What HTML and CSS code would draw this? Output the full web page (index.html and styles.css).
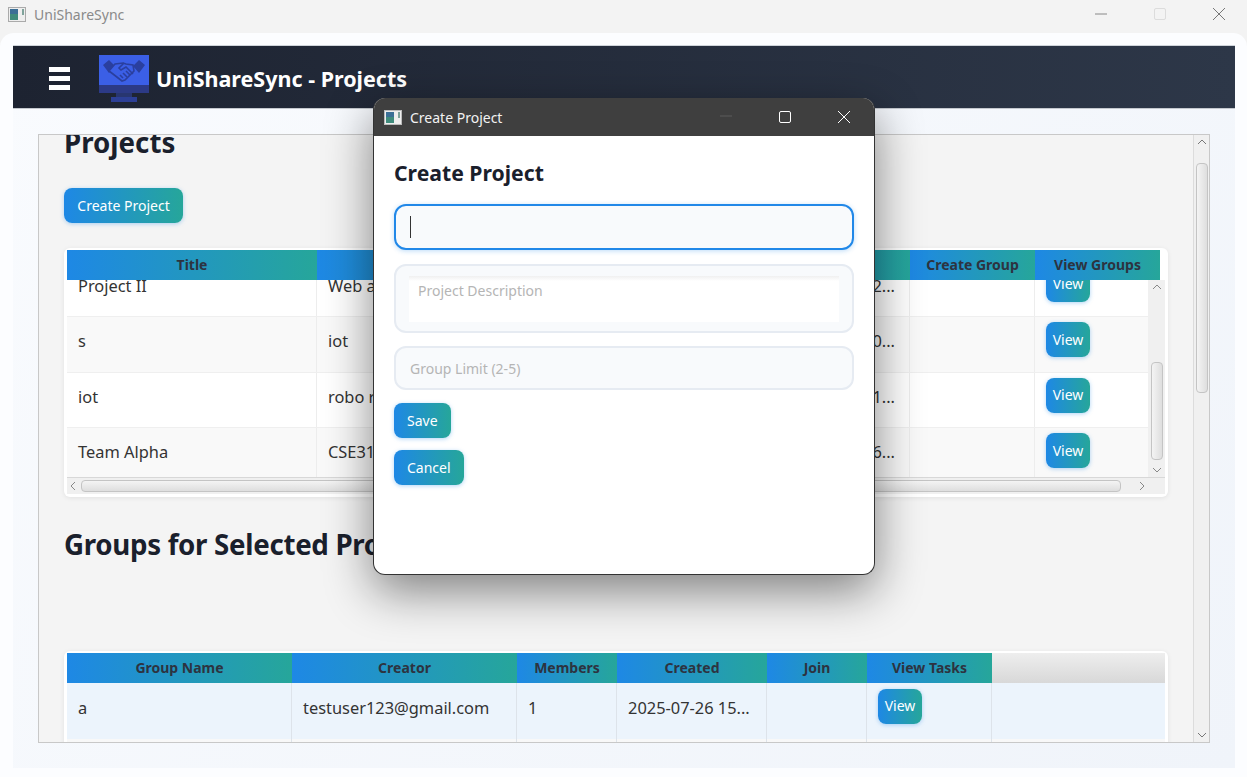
FILE: index.html
```html
<!DOCTYPE html>
<html lang="en">
<head>
  <meta charset="UTF-8" />
  <title>UniShareSync</title>
  <link rel="stylesheet" href="styles.css">
</head>
<body>
  <div class="titlebar">
    <svg class="win-icon" width="18" height="15" viewBox="0 0 18 15">
      <rect x="0.5" y="0.5" width="17" height="14" fill="#eee" stroke="#aaa"/>
      <rect x="2" y="2" width="8" height="11" fill="#3f8b7c"/>
      <rect x="2" y="2" width="8" height="5" fill="#3b6f96"/>
      <rect x="14" y="2" width="2" height="6" fill="#7fa39b"/>
    </svg>
    <span class="titlebar-text">UniShareSync</span>
    <div class="win-controls">
      <svg width="14" height="14" viewBox="0 0 14 14"><path d="M1 7h12" stroke="#888" stroke-width="1"/></svg>
      <svg width="14" height="14" viewBox="0 0 14 14"><rect x="1.5" y="1.5" width="11" height="11" rx="1.5" fill="none" stroke="#dcdcdc"/></svg>
      <svg width="14" height="14" viewBox="0 0 14 14"><path d="M1 1l12 12M13 1L1 13" stroke="#777" stroke-width="1"/></svg>
    </div>
  </div>

  <div class="app">
    <div class="app-inner">
      <header class="navbar">
        <div class="hamburger"><span></span><span></span><span></span></div>
        <svg class="logo" width="50" height="47" viewBox="0 0 50 47">
          <rect x="0" y="0" width="50" height="30" fill="#3b5fe6"/>
          <rect x="0" y="30" width="50" height="8" fill="#2c3a86"/>
          <rect x="17" y="38" width="16" height="4" fill="#283670"/>
          <rect x="12" y="42" width="26" height="5" fill="#2c3f96"/>
          <path d="M4 10l6-5 6 6-6 7zM46 10l-6-5-6 6 6 7z" fill="#2a3f9e"/>
          <path d="M16 9l8-1 3 1 7 1 1 6-9 9-3 1-9-7-4-3z" fill="#3b5fe6" stroke="#2a3f9e" stroke-width="1.6"/>
          <path d="M25 8l-5 5 2 2 5-3 7 7M24 18l4 4M27 16l4 4M21 20l3 3" fill="none" stroke="#2a3f9e" stroke-width="1.6"/>
        </svg>
        <span class="nav-title">UniShareSync - Projects</span>
      </header>

      <div class="main">
        <div class="pane">
          <div class="pane-content">
            <h1 class="page-title first">Projects</h1>
            <button class="btn btn-create">Create Project</button>

            <div class="card projects">
              <div class="thead cols-projects">
                <div class="th">Title</div>
                <div class="th"></div>
                <div class="th"></div>
                <div class="th"></div>
                <div class="th">Create Group</div>
                <div class="th">View Groups</div>
              </div>
              <div class="tbody-wrap">
                <div class="tbody">
                  <div class="row cols-projects">
                    <div class="td">Project II</div><div class="td">Web app</div><div class="td"></div><div class="td end">2...</div><div class="td"></div>
                    <div class="td"><button class="btn btn-view">View</button></div>
                  </div>
                  <div class="row odd cols-projects">
                    <div class="td">s</div><div class="td">iot</div><div class="td"></div><div class="td end">0...</div><div class="td"></div>
                    <div class="td"><button class="btn btn-view">View</button></div>
                  </div>
                  <div class="row cols-projects">
                    <div class="td">iot</div><div class="td">robo r</div><div class="td"></div><div class="td end">1...</div><div class="td"></div>
                    <div class="td"><button class="btn btn-view">View</button></div>
                  </div>
                  <div class="row odd cols-projects">
                    <div class="td">Team Alpha</div><div class="td">CSE31</div><div class="td"></div><div class="td end">6...</div><div class="td"></div>
                    <div class="td"><button class="btn btn-view">View</button></div>
                  </div>
                </div>
                <div class="sb-v small">
                  <svg class="arrow" width="10" height="6" viewBox="0 0 10 6"><path d="M1 5l4-4 4 4" fill="none" stroke="#888"/></svg>
                  <div class="thumb-v small-thumb"></div>
                  <svg class="arrow" width="10" height="6" viewBox="0 0 10 6"><path d="M1 1l4 4 4-4" fill="none" stroke="#888"/></svg>
                </div>
              </div>
              <div class="sb-h">
                <svg class="arrow" width="6" height="10" viewBox="0 0 6 10"><path d="M5 1L1 5l4 4" fill="none" stroke="#888"/></svg>
                <div class="thumb-h"></div>
                <svg class="arrow" width="6" height="10" viewBox="0 0 6 10"><path d="M1 1l4 4-4 4" fill="none" stroke="#888"/></svg>
              </div>
            </div>

            <h1 class="page-title second">Groups for Selected Project</h1>

            <div class="card groups">
              <div class="thead cols-groups">
                <div class="th">Group Name</div>
                <div class="th">Creator</div>
                <div class="th">Members</div>
                <div class="th">Created</div>
                <div class="th">Join</div>
                <div class="th">View Tasks</div>
                <div class="th filler"></div>
              </div>
              <div class="row selected cols-groups">
                <div class="td">a</div><div class="td">testuser123@gmail.com</div><div class="td">1</div>
                <div class="td">2025-07-26 15...</div><div class="td"></div>
                <div class="td"><button class="btn btn-view">View</button></div><div class="td"></div>
              </div>
              <div class="row tail cols-groups">
                <div class="td"></div><div class="td"></div><div class="td"></div><div class="td"></div><div class="td"></div><div class="td"></div><div class="td"></div>
              </div>
            </div>
          </div>

          <div class="sb-v">
            <svg class="arrow" width="10" height="6" viewBox="0 0 10 6"><path d="M1 5l4-4 4 4" fill="none" stroke="#777"/></svg>
            <div class="thumb-v"></div>
            <svg class="arrow" width="10" height="6" viewBox="0 0 10 6"><path d="M1 1l4 4 4-4" fill="none" stroke="#777"/></svg>
          </div>
        </div>
      </div>
    </div>
  </div>

  <div class="modal">
    <div class="modal-bar">
      <svg class="win-icon" width="18" height="15" viewBox="0 0 18 15">
        <rect x="0.5" y="0.5" width="17" height="14" fill="#eee" stroke="#bbb"/>
        <rect x="2" y="2" width="8" height="11" fill="#3f8b7c"/>
        <rect x="2" y="2" width="8" height="5" fill="#3b6f96"/>
        <rect x="14" y="2" width="2" height="6" fill="#7fa39b"/>
      </svg>
      <span class="modal-bar-text">Create Project</span>
      <div class="modal-controls">
        <svg width="14" height="14" viewBox="0 0 14 14"><path d="M1 6h12" stroke="#5c5c5c"/></svg>
        <svg width="14" height="14" viewBox="0 0 14 14"><rect x="1.5" y="1.5" width="11" height="11" rx="1.5" fill="none" stroke="#fff"/></svg>
        <svg width="14" height="14" viewBox="0 0 14 14"><path d="M1 1l12 12M13 1L1 13" stroke="#fff"/></svg>
      </div>
    </div>
    <div class="modal-body">
      <h2 class="modal-title">Create Project</h2>
      <div class="field focused"><span class="caret"></span></div>
      <div class="field area"><div class="area-inner">Project Description</div></div>
      <div class="field placeholder">Group Limit (2-5)</div>
      <button class="btn btn-modal">Save</button>
      <button class="btn btn-modal">Cancel</button>
    </div>
  </div>
</body>
</html>
```

FILE: styles.css
```css
* {
  box-sizing: border-box;
}
html, body {
  height: 100%;
}
body {
  margin: 0;
  height: 777px;
  overflow: hidden;
  background: #f3f3f3;
  font-family: "Noto Sans", Arial, sans-serif;
  color: #333;
  display: flex;
  flex-direction: column;
}

/* window chrome */
.titlebar {
  height: 33px;
  display: flex;
  align-items: center;
  padding: 0 21px 5px 8px;
  flex-shrink: 0;
}
.titlebar-text {
  margin-left: 8px;
  font-size: 14px;
  color: #8a8a8a;
}
.win-icon {
  display: block;
}
.win-controls {
  margin-left: auto;
  display: flex;
  gap: 45px;
}

.app {
  flex: 1;
  min-height: 0;
  background: #fcfdff;
  border-radius: 14px 14px 0 0;
  padding: 12px 12px 9px 13px;
}
.app-inner {
  height: 100%;
  display: flex;
  flex-direction: column;
  background: linear-gradient(135deg, #f9fbfe, #f0f4fa);
}

.navbar {
  height: 64px;
  flex-shrink: 0;
  display: flex;
  align-items: center;
  padding-left: 36px;
  background: linear-gradient(90deg, #1d2331, #2d3748);
  border-top: 1px solid #cfd4da;
  border-bottom: 1px solid #c4c8ce;
}
.hamburger {
  width: 21px;
  display: flex;
  flex-direction: column;
  gap: 4px;
  margin-top: 2px;
}
.hamburger span {
  display: block;
  height: 5px;
  background: #fff;
}
.logo {
  margin-left: 29px;
  margin-top: 2px;
}
.nav-title {
  margin-left: 7px;
  margin-top: 2px;
  font-size: 21.5px;
  font-weight: 700;
  color: #fff;
  white-space: nowrap;
}

/* scroll pane */
.main {
  flex: 1;
  min-height: 0;
  padding: 25px 25px 25px;
}
.pane {
  height: 100%;
  display: flex;
  border: 1px solid #c8c8c8;
  background: #f4f4f4;
}
.pane-content {
  flex: 1;
  min-width: 0;
  overflow: hidden;
  padding-left: 25px;
}
.page-title {
  margin: 0;
  font-size: 27.7px;
  font-weight: 700;
  line-height: 40px;
  color: #1a202c;
}
.page-title.first {
  margin-top: -13px;
}
.page-title.second {
  margin: 27px 0 87px;
  white-space: nowrap;
  letter-spacing: -0.3px;
}

.btn {
  display: block;
  border: 0;
  border-radius: 8px;
  background: linear-gradient(90deg, #1e88e5, #26a69a);
  color: #fff;
  font-family: inherit;
  font-size: 14px;
  box-shadow: 0 1px 4px rgba(30, 136, 229, 0.35);
  padding: 0 0 1px;
}
.btn-create {
  width: 119px;
  height: 35px;
  margin-top: 26px;
}
.btn-view {
  width: 44px;
  height: 35px;
  margin-top: -2px;
}

/* tables */
.card {
  width: 1104px;
  background: #fff;
  border-radius: 6px;
  padding: 2px 3px 3px;
  box-shadow: 0 1px 5px rgba(0, 0, 0, 0.08);
}
.projects {
  margin-top: 25px;
}
.groups {
  height: 100px;
  overflow: hidden;
  border-radius: 6px 6px 0 0;
}
.cols-projects {
  display: grid;
  grid-template-columns: 250px 250px 193px 150px 125px 125px;
}
.cols-groups {
  display: grid;
  grid-template-columns: 225px 225px 100px 150px 100px 125px 173px;
}
.thead {
  height: 30px;
}
.th {
  display: flex;
  align-items: center;
  justify-content: center;
  padding-bottom: 2px;
  background: linear-gradient(90deg, #1e88e5, #26a69a);
  font-size: 14px;
  font-weight: 700;
  color: #2d3340;
}
.th.filler {
  background: linear-gradient(180deg, #eeeeee, #d8d8d8);
}
.tbody-wrap {
  height: 197px;
  display: flex;
  overflow: hidden;
}
.tbody {
  flex: 1;
  min-width: 0;
  overflow: hidden;
}
.row {
  height: 55.5px;
  background: #fff;
  border-bottom: 1px solid #efefef;
}
.tbody .row:first-child {
  margin-top: -18.5px;
}
.row.odd {
  background: #f9f9f9;
}
.row.selected {
  background: #ecf4fc;
  border-bottom: 0;
}
.row.tail {
  background: #f8f8f8;
  height: 20px;
}
.td {
  display: flex;
  align-items: center;
  padding: 0 0 7px 11px;
  font-size: 16.4px;
  color: #333;
  white-space: nowrap;
  overflow: hidden;
  border-right: 1px solid #ededed;
  min-width: 0;
}
.selected .td, .tail .td {
  border-right-color: #dde3ea;
}
.td.end {
  justify-content: flex-end;
  padding-right: 14px;
}
.row .td:last-child {
  border-right: 0;
}

/* scrollbars */
.sb-v {
  width: 16px;
  flex-shrink: 0;
  display: flex;
  flex-direction: column;
  align-items: center;
  background: #f0f0f0;
  border-left: 1px solid #dcdcdc;
  padding: 4px 0 4px;
}
.sb-v.small {
  width: 17px;
  border-left: 0;
}
.arrow {
  display: block;
  flex-shrink: 0;
}
.thumb-v {
  width: 12px;
  height: 230px;
  margin-top: 18px;
  margin-bottom: auto;
  border: 1px solid #c4c4c4;
  border-radius: 4px;
  background: linear-gradient(90deg, #f4f4f4, #dedede);
}
.small-thumb {
  height: 98px;
  margin-top: 72px;
  margin-bottom: auto;
}
.sb-h {
  height: 17px;
  display: flex;
  align-items: center;
  background: #f0f0f0;
  border-top: 1px solid #d8d8d8;
  padding: 0 20px 0 3px;
}
.thumb-h {
  width: 1040px;
  height: 12px;
  margin: 0 auto 0 5px;
  border: 1px solid #c4c4c4;
  border-radius: 4px;
  background: linear-gradient(180deg, #f4f4f4, #dedede);
}

/* dialog */
.modal {
  position: absolute;
  left: 373px;
  top: 98px;
  width: 502px;
  height: 477px;
  background: #fff;
  border: 1px solid #333;
  border-top: 0;
  border-radius: 12px;
  box-shadow: 0 16px 48px rgba(0, 0, 0, 0.48);
  overflow: hidden;
}
.modal-bar {
  height: 38px;
  display: flex;
  align-items: center;
  padding: 0 23px 0 10px;
  background: #3f3f3f;
}
.modal-bar-text {
  margin-left: 8px;
  font-size: 14px;
  color: #f2f2f2;
}
.modal-controls {
  margin-left: auto;
  display: flex;
  gap: 45px;
}
.modal-body {
  padding: 22px 20px 20px;
  display: flex;
  flex-direction: column;
  align-items: flex-start;
}
.modal-title {
  margin: 0;
  font-size: 21.2px;
  font-weight: 700;
  line-height: 30px;
  color: #1a202c;
}
.field {
  width: 460px;
  height: 44px;
  margin-top: 13px;
  padding-left: 14px;
  display: flex;
  align-items: center;
  background: #f8fafc;
  border: 2px solid #e6ebf2;
  border-radius: 12px;
}
.field.focused {
  height: 46px;
  margin-top: 16px;
  border-color: #2188e8;
  box-shadow: 0 1px 5px rgba(33, 136, 232, 0.3);
}
.field.focused + .field {
  margin-top: 14px;
}
.caret {
  display: block;
  width: 1px;
  height: 22px;
  background: #333;
}
.field.area {
  height: 69px;
  padding: 0 13px;
}
.area-inner {
  width: 100%;
  height: 46px;
  padding: 5px 9px;
  background: linear-gradient(180deg, #f0f0f0, #ffffff 5px);
  font-size: 14px;
  color: #b5b5b5;
}
.field.placeholder {
  font-size: 14px;
  color: #b5b5b5;
}
.btn-modal {
  height: 35px;
  padding: 0 13px 1px;
  margin-top: 12px;
}
.field.placeholder + .btn-modal {
  margin-top: 13px;
}
```
